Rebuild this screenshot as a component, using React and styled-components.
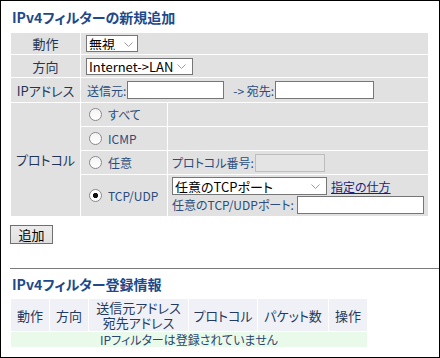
import React from "react";
import styled, { createGlobalStyle } from "styled-components";

const GlobalStyle = createGlobalStyle`
  html, body { margin: 0; padding: 0; background: #fff; }
  body {
    font-family: "Noto Sans CJK JP", "Noto Sans", "Liberation Sans", sans-serif;
    font-feature-settings: "palt";
  }
`;

const Frame = styled.div`
  width: 440px;
  height: 358px;
  box-sizing: border-box;
  border: 1px solid #000;
  padding: 0 0 0 9px;
  overflow: hidden;
`;

const Title = styled.h2`
  margin: ${(p) => p.$mt}px 0 0 2px;
  font-size: 14px;
  line-height: 18px;
  font-weight: bold;
  color: #21498a;
`;

const FormTable = styled.table`
  border-collapse: separate;
  border-spacing: 1px;
  table-layout: fixed;
  width: 419px;
  margin-top: 6px;
`;

const Col = styled.col`
  width: ${(p) => p.$w}px;
`;

const Row = styled.tr`
  height: ${(p) => p.$h}px;
`;

const Label = styled.th`
  background: #e1e1e1;
  font-weight: normal;
  font-size: 13px;
  color: #1f3658;
  text-align: center;
  padding: 0;
  white-space: nowrap;
`;

const Cell = styled.td`
  background: #e1e1e1;
  padding: 0 0 0 ${(p) => (p.$pl !== undefined ? p.$pl : 4)}px;
  font-size: 12px;
  color: #2c4d7c;
  vertical-align: middle;
  white-space: nowrap;
`;

const Line = styled.div`
  display: flex;
  align-items: center;
  height: ${(p) => p.$h || 18}px;
`;

const SelectWrap = styled.span`
  position: relative;
  display: inline-flex;
  width: ${(p) => p.$w}px;
  height: ${(p) => p.$h}px;
`;

const Select = styled.select`
  appearance: none;
  -webkit-appearance: none;
  width: 100%;
  height: 100%;
  box-sizing: border-box;
  margin: 0;
  border: 1px solid #767676;
  border-radius: 0;
  background: #fff;
  color: #000;
  font-family: inherit;
  font-feature-settings: "palt";
  font-size: 13px;
  line-height: 1;
  padding: 0 14px 0 2px;
`;

const Chevron = styled.svg`
  position: absolute;
  right: ${(p) => p.$r || 6}px;
  top: 50%;
  margin-top: -2px;
  pointer-events: none;
`;

const TextInput = styled.input`
  width: ${(p) => p.$w}px;
  height: ${(p) => p.$h || 18}px;
  box-sizing: border-box;
  margin: 0 0 0 ${(p) => p.$ml || 0}px;
  border: 1px solid ${(p) => (p.disabled ? "#bdbdbd" : "#767676")};
  background: ${(p) => (p.disabled ? "#e4e4e4" : "#fff")};
  padding: 0 2px;
  font-size: 12px;
`;

const Arrow = styled.span`
  margin-left: 9px;
`;

const RadioLabel = styled.label`
  display: flex;
  align-items: center;
  gap: 6px;
  padding-left: 8px;
`;

const Radio = styled.input`
  appearance: none;
  -webkit-appearance: none;
  width: 13px;
  height: 13px;
  margin: 0;
  border: 1px solid #8a8a8a;
  border-radius: 50%;
  box-sizing: border-box;
  background: ${(p) =>
    p.checked
      ? "radial-gradient(circle, #111 0 2.4px, #fdfdfd 2.9px)"
      : "linear-gradient(#f4f4f4, #ffffff)"};
`;

const Link = styled.a`
  margin-left: 4px;
  color: #1c1f7c;
  text-decoration: underline;
  font-size: 12px;
`;

const Button = styled.button`
  display: block;
  margin: 8px 0 0 0;
  height: 19px;
  width: 43px;
  padding: 0;
  border: 1px solid #707070;
  background: linear-gradient(#ececec, #e0e0e0);
  color: #000;
  font-family: inherit;
  font-size: 13px;
  line-height: 1;
`;

const Rule = styled.hr`
  margin: 24px 0 0 0;
  border: 0;
  border-top: 1px solid #7a7a7a;
  height: 0;
`;

const ListTable = styled.table`
  border-collapse: separate;
  border-spacing: 1px;
  table-layout: fixed;
  width: 358px;
  margin-top: 5px;
`;

const HeadCell = styled.th`
  background: #f0f1f7;
  font-weight: normal;
  font-size: 13px;
  line-height: 15px;
  color: #243a5e;
  padding: 0;
  height: 32px;
  text-align: center;
  white-space: nowrap;
`;

const EmptyCell = styled.td`
  background: #eafaea;
  height: 15px;
  padding: 0;
  font-size: 12px;
  line-height: 15px;
  color: #2b4670;
  text-align: center;
`;

const Dropdown = ({ w, h, r, children }) => (
  <SelectWrap $w={w} $h={h}>
    <Select defaultValue={children}>
      <option>{children}</option>
    </Select>
    <Chevron $r={r} width="9" height="5" viewBox="0 0 9 5">
      <polyline points="0.5,0.5 4.5,4.5 8.5,0.5" fill="none" stroke="#9a9a9a" strokeWidth="1" />
    </Chevron>
  </SelectWrap>
);

export default function App() {
  return (
    <>
      <GlobalStyle />
      <Frame>
        <Title $mt={7}>IPv4フィルターの新規追加</Title>
        <FormTable>
          <colgroup>
            <Col $w={69} />
            <Col $w={86} />
            <Col $w={260} />
          </colgroup>
          <tbody>
            <Row $h={21}>
              <Label>動作</Label>
              <Cell colSpan={2} $pl={5}>
                <Line $h={17}>
                  <Dropdown w={52} h={17} r={5}>無視</Dropdown>
                </Line>
              </Cell>
            </Row>
            <Row $h={22}>
              <Label>方向</Label>
              <Cell colSpan={2} $pl={5}>
                <Line $h={17}>
                  <Dropdown w={107} h={17} r={7}>Internet-&gt;LAN</Dropdown>
                </Line>
              </Cell>
            </Row>
            <Row $h={24}>
              <Label>IPアドレス</Label>
              <Cell colSpan={2} $pl={6}>
                <Line>
                  送信元:
                  <TextInput $w={97} $ml={1} />
                  <Arrow>-&gt; 宛先:</Arrow>
                  <TextInput $w={99} $ml={1} />
                </Line>
              </Cell>
            </Row>
            <Row $h={23}>
              <Label rowSpan={4}>プロトコル</Label>
              <Cell $pl={0}>
                <RadioLabel>
                  <Radio type="radio" name="proto" readOnly checked={false} />
                  すべて
                </RadioLabel>
              </Cell>
              <Cell />
            </Row>
            <Row $h={23}>
              <Cell $pl={0}>
                <RadioLabel>
                  <Radio type="radio" name="proto" readOnly checked={false} />
                  ICMP
                </RadioLabel>
              </Cell>
              <Cell />
            </Row>
            <Row $h={23}>
              <Cell $pl={0}>
                <RadioLabel>
                  <Radio type="radio" name="proto" readOnly checked={false} />
                  任意
                </RadioLabel>
              </Cell>
              <Cell $pl={4}>
                <Line>
                  プロトコル番号:
                  <TextInput $w={70} $ml={1} disabled />
                </Line>
              </Cell>
            </Row>
            <Row $h={41}>
              <Cell $pl={0}>
                <RadioLabel>
                  <Radio type="radio" name="proto" readOnly checked />
                  TCP/UDP
                </RadioLabel>
              </Cell>
              <Cell $pl={4}>
                <Line>
                  <Dropdown w={155} h={18} r={7}>任意のTCPポート</Dropdown>
                  <Link href="#">指定の仕方</Link>
                </Line>
                <Line $h={19}>
                  任意のTCP/UDPポート:
                  <TextInput $w={127} $ml={3} />
                </Line>
              </Cell>
            </Row>
          </tbody>
        </FormTable>
        <Button type="button">追加</Button>
        <Rule />
        <Title $mt={6}>IPv4フィルター登録情報</Title>
        <ListTable>
          <colgroup>
            <Col $w={38} />
            <Col $w={38} />
            <Col $w={99} />
            <Col $w={68} />
            <Col $w={70} />
            <Col $w={38} />
          </colgroup>
          <tbody>
            <tr>
              <HeadCell>動作</HeadCell>
              <HeadCell>方向</HeadCell>
              <HeadCell>
                送信元アドレス
                <br />
                宛先アドレス
              </HeadCell>
              <HeadCell>プロトコル</HeadCell>
              <HeadCell>パケット数</HeadCell>
              <HeadCell>操作</HeadCell>
            </tr>
            <tr>
              <EmptyCell colSpan={6}>IPフィルターは登録されていません</EmptyCell>
            </tr>
          </tbody>
        </ListTable>
      </Frame>
    </>
  );
}
